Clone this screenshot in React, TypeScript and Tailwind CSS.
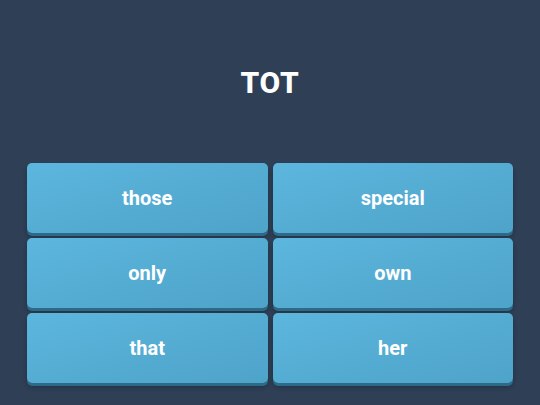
import React from "react";

const words = ["those", "special", "only", "own", "that", "her"];

export default function App() {
  return (
    <div
      className="w-[540px] h-[405px] bg-[#2e3f56] flex flex-col px-[27px] pb-[22px]"
      style={{ fontFamily: "Roboto, 'Liberation Sans', sans-serif" }}
    >
      {/* prompt word */}
      <div className="flex-1 flex items-center justify-center pt-[2px]">
        <h1 className="text-white font-extrabold text-[30px] leading-none tracking-wide">TOT</h1>
      </div>

      {/* answer choices */}
      <div className="grid grid-cols-2 gap-x-[5px] gap-y-[5px]">
        {words.map((w) => (
          <button
            key={w}
            className="h-[70px] rounded-[5px] bg-gradient-to-br from-[#5cb6de] to-[#4ea3c9] shadow-[0_3px_0_#2c6a88,0_4px_4px_rgba(0,0,0,0.25)] text-white font-bold text-[20px] flex items-center justify-center"
          >
            {w}
          </button>
        ))}
      </div>
    </div>
  );
}
